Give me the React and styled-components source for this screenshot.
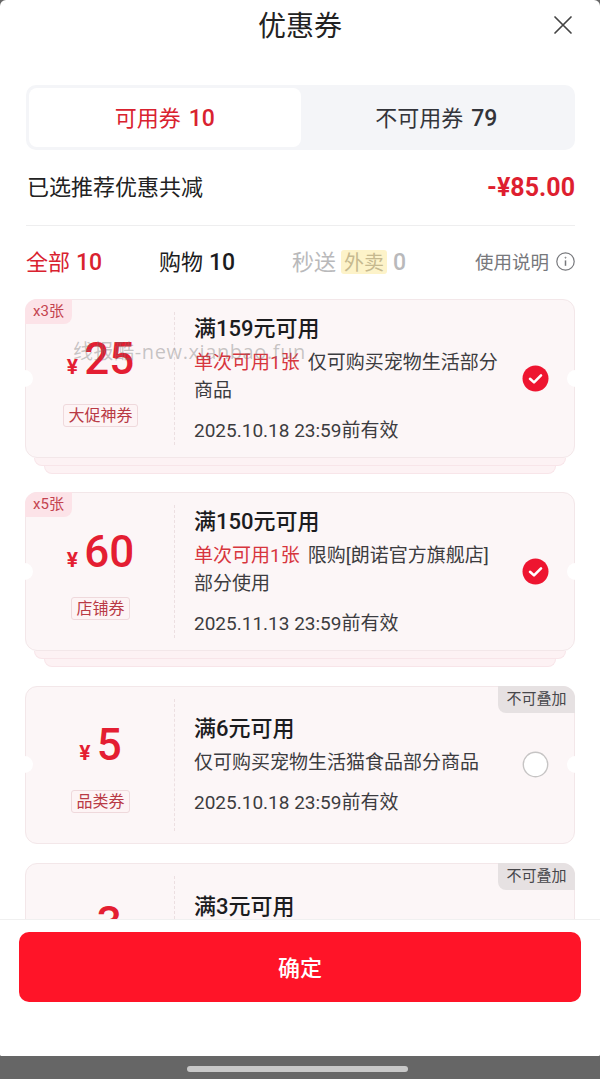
import React from 'react'
import styled, { createGlobalStyle } from 'styled-components'

const GlobalStyle = createGlobalStyle`
  html, body {
    margin: 0;
    padding: 0;
    background: #666;
  }
  * {
    box-sizing: border-box;
  }
`

const FONT = `Roboto, "Noto Sans CJK SC", "Noto Sans", sans-serif`
const CJK_FONT = `"Noto Sans CJK SC", "Noto Sans", sans-serif`

const Page = styled.div`
  position: relative;
  width: 600px;
  height: 1079px;
  display: flex;
  flex-direction: column;
  overflow: hidden;
  font-family: ${FONT};
  color: #1c1c1e;
`

const Sheet = styled.div`
  flex: 1;
  min-height: 0;
  display: flex;
  flex-direction: column;
  background: #fff;
  border-radius: 6px 6px 2px 2px;
  overflow: hidden;
`

const Header = styled.header`
  height: 85px;
  flex: none;
  display: flex;
  justify-content: center;
  padding-top: 4px;
  position: relative;
`

const Title = styled.h1`
  margin: 0;
  font-family: ${CJK_FONT};
  font-size: 28px;
  line-height: 40px;
  font-weight: 400;
  color: #222;
`

const CloseButton = styled.button`
  position: absolute;
  top: 15px;
  right: 27px;
  width: 20px;
  height: 20px;
  padding: 0;
  border: 0;
  background: none;
  color: #444;
`

const Body = styled.div`
  padding: 0 25px 0 26px;
  flex: none;
`

const Tabs = styled.div`
  height: 65px;
  display: grid;
  grid-template-columns: 1fr 1fr;
  padding: 3px;
  border-radius: 10px;
  background: #f4f5f8;
`

const Tab = styled.div`
  text-align: center;
  font-family: ${CJK_FONT};
  font-size: 22px;
  line-height: 56px;
  color: ${p => (p.$active ? '#d9222f' : '#33343a')};
  background: ${p => (p.$active ? '#fff' : 'transparent')};
  border-radius: 8px;
`

const Count = styled.span`
  margin-left: ${p => p.$gap ?? 3}px;
  font-family: ${FONT};
  font-size: 23px;
  font-weight: 500;
`

const Summary = styled.div`
  height: 76px;
  display: flex;
  align-items: center;
  justify-content: space-between;
  padding-bottom: 1px;
  border-bottom: 1px solid #eeeeef;
`

const SummaryLabel = styled.span`
  font-family: ${CJK_FONT};
  font-size: 22px;
  line-height: 32px;
  color: #222;
  margin: 0 0 4px 1px;
`

const SummaryValue = styled.span`
  font-size: 25px;
  line-height: 32px;
  font-weight: 700;
  color: #de1f30;
  margin-top: 2px;
`

const Filters = styled.div`
  height: 73px;
  display: flex;
  align-items: center;
  padding-bottom: 3px;
  font-size: 22px;
`

const Filter = styled.div`
  width: ${p => p.$width}px;
  font-family: ${CJK_FONT};
  line-height: 32px;
  color: ${p => p.$color};
`

const DeliveryMark = styled.span`
  display: inline-block;
  width: 46px;
  height: 24px;
  line-height: 24px;
  text-align: center;
  font-size: 20px;
  color: #c6b98f;
  background: #fdf3c9;
  border-radius: 3px;
`

const HelpLink = styled.div`
  margin-left: auto;
  display: flex;
  align-items: center;
  gap: 7px;
  font-family: ${CJK_FONT};
  font-size: 18.5px;
  color: #77787c;
`

const List = styled.div`
  flex: 1;
  min-height: 0;
  overflow: hidden;
  padding: 0 25px;
  display: flex;
  flex-direction: column;
  gap: 18.3px;
`

const CouponWrap = styled.div`
  flex: none;
  margin-bottom: ${p => (p.$stacked ? 0 : '1px')};
`

const Ticket = styled.div`
  position: relative;
  height: ${p => (p.$stacked ? '159px' : '158.5px')};
  display: flex;
  align-items: stretch;
  background: #fcf6f7;
  border: 1px solid #f3e7e9;
  border-radius: 12px;
`

const StackLayer = styled.div`
  height: 8px;
  margin: 0 ${p => p.$inset}px;
  background: #fdf2f4;
  border: 1px solid #f8e5e9;
  border-top: 0;
  border-radius: 0 0 10px 10px;
`

const Notch = styled.span`
  position: absolute;
  top: 50%;
  ${p => p.$side}: -10px;
  width: 17px;
  height: 17px;
  margin-top: -9px;
  border-radius: 50%;
  background: #fff;
`

const CountBadge = styled.span`
  position: absolute;
  top: -1px;
  left: -1px;
  width: 47px;
  height: 25px;
  line-height: 25px;
  text-align: center;
  font-size: 15px;
  color: #c4434f;
  background: #fce3e8;
  border-radius: 12px 0 8px 0;
`

const NoStackBadge = styled.span`
  position: absolute;
  top: -1px;
  right: -1px;
  width: 77px;
  height: 27px;
  line-height: 27px;
  text-align: center;
  font-size: 15px;
  color: #47474b;
  background: #e6e1e2;
  border-radius: 0 12px 0 8px;
`

const Face = styled.div`
  width: 148px;
  flex: none;
  display: flex;
  flex-direction: column;
  align-items: center;
  justify-content: center;
  padding-left: 1px;
`

const Amount = styled.div`
  display: flex;
  align-items: baseline;
  gap: 6px;
  height: 58px;
  color: #e41e32;
`

const Currency = styled.span`
  font-size: 21px;
  font-weight: 700;
`

const Value = styled.span`
  font-size: 44px;
  line-height: 58px;
  font-weight: 500;
`

const KindTag = styled.span`
  margin-top: 16px;
  height: 23px;
  line-height: 21px;
  padding: 0 4px;
  font-size: 16px;
  color: #b93a45;
  background: #fdf4f5;
  border: 1px solid #efd9dc;
  border-radius: 3px;
`

const Rule = styled.div`
  flex: none;
  margin: 12px 0;
  border-left: 1px dashed #ecdfe1;
`

const Info = styled.div`
  flex: 1;
  min-width: 0;
  display: flex;
  flex-direction: column;
  justify-content: center;
  padding: 3px 0 0 19px;
`

const Threshold = styled.div`
  font-size: 22px;
  line-height: 28px;
  font-weight: 500;
  color: #1c1c1e;
`

const Desc = styled.div`
  width: 306px;
  margin-top: 6px;
  font-size: 19px;
  line-height: 28px;
  color: #3c3c40;
`

const Limit = styled.span`
  color: #d7353d;
  margin-right: 8px;
`

const Expiry = styled.div`
  margin-top: 12px;
  font-size: 19px;
  line-height: 28px;
  color: #3c3c40;
`

const Pick = styled.div`
  flex: none;
  align-self: center;
  width: 27px;
  height: 27px;
  margin: 0 25px 0 20px;
  display: flex;
`

const Footer = styled.footer`
  flex: none;
  height: 137px;
  padding: 12px 19px 0;
  background: #fff;
  border-top: 1px solid #f0f0f0;
  position: relative;
  z-index: 1;
`

const ConfirmButton = styled.button`
  display: block;
  width: 100%;
  height: 70px;
  padding: 0 0 2px;
  border: 0;
  border-radius: 10px;
  background: #ff1428;
  color: #fff;
  font-family: ${CJK_FONT};
  font-size: 22px;
  font-weight: 500;
`

const NavBar = styled.div`
  flex: none;
  height: 23px;
  padding: 10px 0 0 187px;
  background: #666;
`

const NavPill = styled.div`
  width: 221px;
  height: 6px;
  border-radius: 3px;
  background: #c8c8c8;
`

const Watermark = styled.div`
  position: absolute;
  top: 340px;
  left: 73px;
  font-family: "Open Sans", "Noto Sans CJK SC", sans-serif;
  font-size: 20px;
  line-height: 24px;
  letter-spacing: 0.6px;
  color: rgba(110, 110, 110, 0.38);
  white-space: nowrap;
  z-index: 2;
`

const CheckedIcon = () => (
  <svg width="27" height="27" viewBox="0 0 27 27">
    <circle cx="13.5" cy="13.5" r="13" fill="#ee1530" />
    <path d="M8 13.8l4 3.6 7-7" fill="none" stroke="#fff" strokeWidth="2.6" strokeLinecap="round" strokeLinejoin="round" />
  </svg>
)

const UncheckedIcon = () => (
  <svg width="27" height="27" viewBox="0 0 27 27">
    <circle cx="13.5" cy="13.5" r="12.2" fill="#fff" stroke="#c6c4c4" strokeWidth="1.4" />
  </svg>
)

const InfoIcon = () => (
  <svg width="19" height="19" viewBox="0 0 19 19" fill="none" stroke="#77787c">
    <circle cx="9.5" cy="9.5" r="8.7" strokeWidth="1.2" />
    <path d="M9.5 8.4v5.4" strokeWidth="1.5" />
    <circle cx="9.5" cy="5.7" r="0.5" strokeWidth="1" />
  </svg>
)

const coupons = [
  {
    value: '25', kind: '大促神券', count: 'x3张', title: '满159元可用', limit: '单次可用1张',
    desc: '仅可购买宠物生活部分商品', expiry: '2025.10.18 23:59前有效', checked: true,
  },
  {
    value: '60', kind: '店铺券', count: 'x5张', title: '满150元可用', limit: '单次可用1张',
    desc: '限购[朗诺官方旗舰店]部分使用', expiry: '2025.11.13 23:59前有效', checked: true,
  },
  {
    value: '5', kind: '品类券', title: '满6元可用',
    desc: '仅可购买宠物生活猫食品部分商品', expiry: '2025.10.18 23:59前有效', noStack: true,
  },
  {
    value: '3', kind: '品类券', title: '满3元可用',
    desc: '仅可购买宠物生活猫食品部分商品', expiry: '2025.10.18 23:59前有效', noStack: true,
  },
]

const Coupon = ({ value, kind, count, title, limit, desc, expiry, checked, noStack }) => (
  <CouponWrap $stacked={!!count}>
    <Ticket $stacked={!!count}>
      <Notch $side="left" />
      <Notch $side="right" />
      {count && <CountBadge>{count}</CountBadge>}
      {noStack && <NoStackBadge>不可叠加</NoStackBadge>}
      <Face>
        <Amount>
          <Currency>¥</Currency>
          <Value>{value}</Value>
        </Amount>
        <KindTag>{kind}</KindTag>
      </Face>
      <Rule />
      <Info>
        <Threshold>{title}</Threshold>
        <Desc>
          {limit && <Limit>{limit}</Limit>}
          {desc}
        </Desc>
        <Expiry>{expiry}</Expiry>
      </Info>
      <Pick>{checked ? <CheckedIcon /> : <UncheckedIcon />}</Pick>
    </Ticket>
    {count && (
      <>
        <StackLayer $inset={9} />
        <StackLayer $inset={19} />
      </>
    )}
  </CouponWrap>
)

export default function App() {
  return (
    <Page>
      <GlobalStyle />
      <Sheet>
        <Header>
          <Title>优惠券</Title>
          <CloseButton aria-label="关闭">
            <svg width="20" height="20" viewBox="0 0 20 20" fill="none" stroke="currentColor" strokeWidth="1.7" strokeLinecap="round">
              <path d="M2 2l16 16M18 2L2 18" />
            </svg>
          </CloseButton>
        </Header>

        <Body>
          <Tabs>
            <Tab $active>可用券 <Count>10</Count></Tab>
            <Tab>不可用券 <Count>79</Count></Tab>
          </Tabs>
          <Summary>
            <SummaryLabel>已选推荐优惠共减</SummaryLabel>
            <SummaryValue>-¥85.00</SummaryValue>
          </Summary>
          <Filters>
            <Filter $width={133} $color="#d9222f">全部 <Count $gap={1}>10</Count></Filter>
            <Filter $width={133} $color="#1c1c1e">购物 <Count $gap={1}>10</Count></Filter>
            <Filter $width={125} $color="#b9b9bb">
              秒送 <DeliveryMark>外卖</DeliveryMark> <Count $gap={1}>0</Count>
            </Filter>
            <HelpLink>使用说明 <InfoIcon /></HelpLink>
          </Filters>
        </Body>

        <List>
          {coupons.map(c => <Coupon key={c.title} {...c} />)}
        </List>

        <Footer>
          <ConfirmButton>确定</ConfirmButton>
        </Footer>
      </Sheet>
      <NavBar>
        <NavPill />
      </NavBar>
      <Watermark>线报酷-new.xianbao.fun</Watermark>
    </Page>
  )
}
